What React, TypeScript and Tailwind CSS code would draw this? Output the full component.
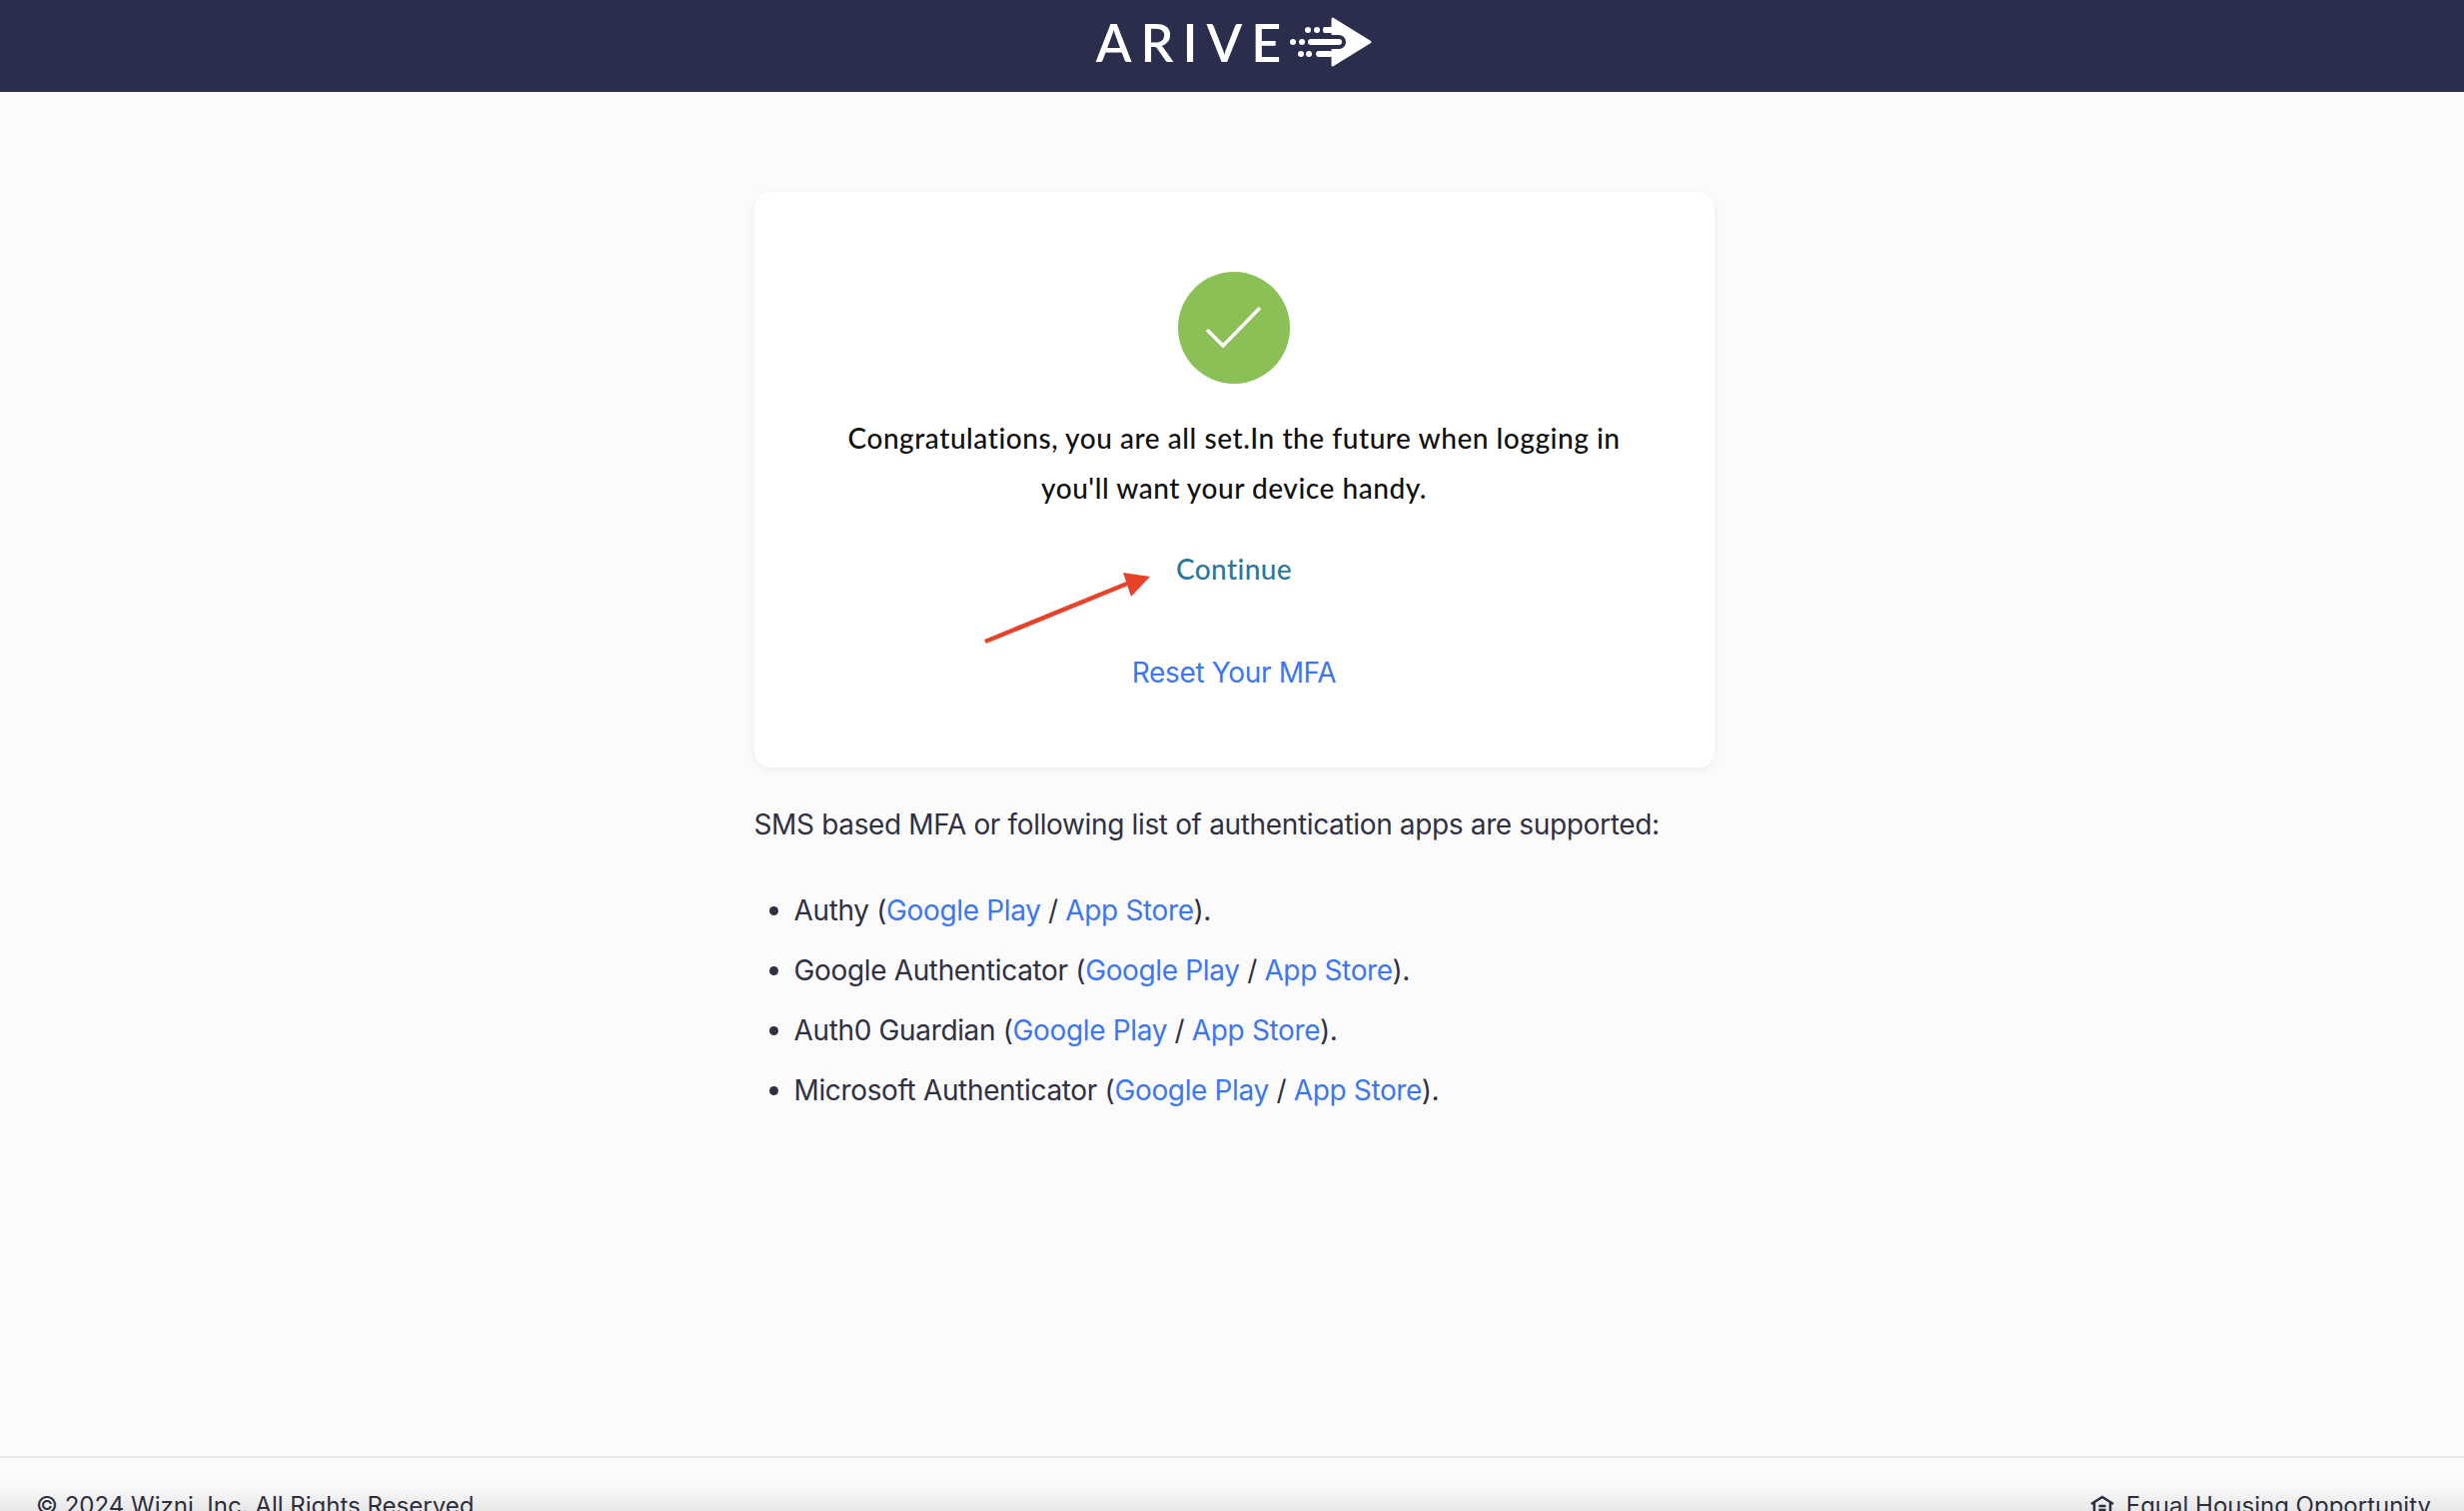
const apps = ['Authy', 'Google Authenticator', 'Auth0 Guardian', 'Microsoft Authenticator']

function LogoArrow() {
  return (
    <svg width="82" height="50" viewBox="0 0 82 50" fill="#fff" className="shrink-0">
      <path d="M43 0.500 L81 24 Q82 25 81 26 L43 49.500 Q41.500 50 41.500 48 V2 Q41.500 0 43 0.500 Z" />
      <rect x="33" y="10" width="10" height="6" rx="2" />
      <rect x="26" y="34" width="17" height="6" rx="3" />
      <rect x="16" y="18" width="40" height="14" rx="7" fill="#2a2d4b" />
      <rect x="18" y="22" width="34" height="6" rx="3" />
      <circle cx="3" cy="25" r="3" />
      <circle cx="12" cy="25" r="3" />
      <circle cx="18" cy="13" r="3" />
      <circle cx="27" cy="13" r="3" />
      <circle cx="11" cy="37" r="3" />
      <circle cx="19" cy="37" r="3" />
    </svg>
  )
}

function EqualHousing() {
  return (
    <svg width="24" height="22" viewBox="0 0 24 22" fill="none" stroke="#2d3142" strokeWidth="2.500">
      <path d="M1 9 L12 2 L23 9 M4 8 V21 H20 V8" />
      <path d="M8.500 11 H15.500 M8.500 15 H15.500" />
    </svg>
  )
}

export default function App() {
  return (
    <div className="h-[1512px] overflow-hidden flex flex-col bg-[#fbfbfb] font-['Inter',sans-serif] text-[#2f3142]">
      <header className="h-[92px] shrink-0 bg-[#2a2d4b] flex items-start justify-center pt-[17px] pl-[4px]">
        <div className="flex items-center">
          <span className="font-['Lato',sans-serif] font-semibold text-[52px] leading-[50px] tracking-[9px] text-white">ARIVE</span>
          <LogoArrow />
        </div>
      </header>

      <main className="flex-1 pt-[100px] pl-[4px]">
        <div className="w-[961px] mx-auto">
          <div className="h-[576px] bg-white rounded-[16px] shadow-[0_2px_8px_rgba(0,0,0,0.06)] pt-[80px] flex flex-col items-center relative">
            <div className="w-[112px] h-[112px] rounded-full bg-[#8bc057] flex items-center justify-center">
              <svg width="60" height="46" viewBox="0 0 60 46" fill="none" stroke="#fff" strokeWidth="3.500">
                <path d="M3 25 L19 41 L56 3" />
              </svg>
            </div>
            <p className="mt-[29px] font-['Lato',sans-serif] font-medium text-[28px] leading-[50px] tracking-[0.550px] text-[#111] text-center w-[840px]">
              Congratulations, you are all set.In the future when logging in<br />you'll want your device handy.
            </p>
            <a className="mt-[31px] font-['Lato',sans-serif] font-medium text-[28px] leading-[50px] tracking-[0.400px] text-[#29799f]">Continue</a>
            <a className="mt-[54px] text-[28px] leading-[50px] tracking-[-0.350px] text-[#3b76f6]">Reset Your MFA</a>

            {/* red annotation arrow */}
            <svg className="absolute left-[225px] top-[370px]" width="180" height="90" viewBox="0 0 180 90">
              <path d="M6 80 L148 22" stroke="#e8432a" strokeWidth="4.500" fill="none" />
              <path d="M171 15 L144 11 L152 35 Z" fill="#e8432a" />
            </svg>
          </div>

          <p className="mt-[32px] text-[28px] leading-[50px] tracking-[-0.350px]">SMS based MFA or following list of authentication apps are supported:</p>

          <ul className="mt-[36px] pl-[40px] list-disc flex flex-col gap-[10px] text-[28px] leading-[50px] tracking-[-0.350px]">
            {apps.map((app) => (
              <li key={app}>
                {app} (<a className="text-[#3b76f6]">Google Play</a> / <a className="text-[#3b76f6]">App Store</a>).
              </li>
            ))}
          </ul>
        </div>
      </main>

      <footer className="h-[55px] shrink-0 border-t-2 border-[#e5e5ea] pl-[36px] pr-[33px] pt-[30px] flex justify-between text-[24px] leading-[36px] relative">
        <span>© 2024 Wizni, Inc. All Rights Reserved</span>
        <span className="flex items-center gap-[12px] h-[36px]">
          <EqualHousing />
          Equal Housing Opportunity
        </span>
        <div className="absolute left-0 right-0 bottom-0 h-[28px] bg-gradient-to-b from-transparent to-[#00000014]" />
      </footer>
    </div>
  )
}
